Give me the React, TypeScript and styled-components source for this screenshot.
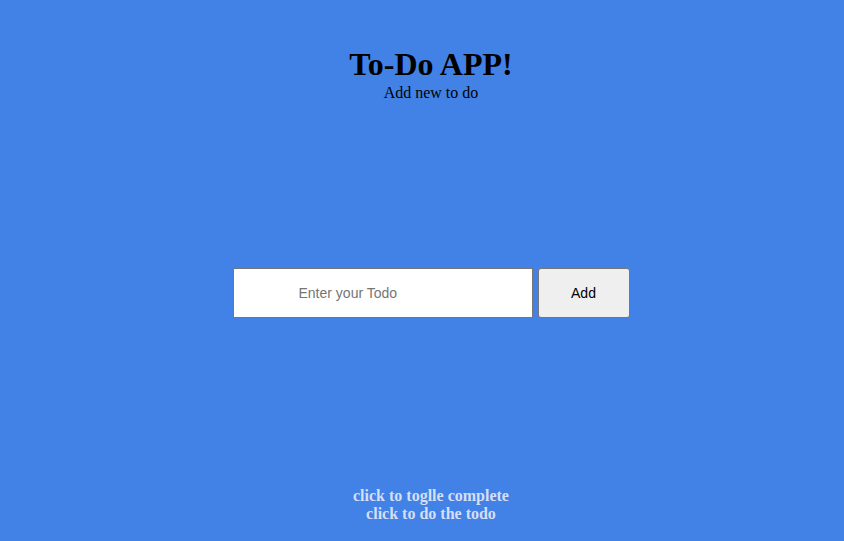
import React from "react";
import styled, { createGlobalStyle } from "styled-components";

const Global = createGlobalStyle`
  html, body { margin: 0; padding: 0; background: #4282e6; }
  body { font-family: "Liberation Serif", "Times New Roman", serif; }
`;

const Page = styled.div`
  box-sizing: border-box;
  height: 541px;
  padding-left: 18px;
  display: flex;
  flex-direction: column;
  align-items: center;
  background: #4282e6;
`;

const Header = styled.header`
  padding-top: 46px;
  display: flex;
  flex-direction: column;
  align-items: center;
`;

const Title = styled.h1`
  margin: 0;
  font-size: 32px;
  line-height: 37px;
  font-weight: bold;
  color: #000;
`;

const Subtitle = styled.div`
  margin-top: 1px;
  font-size: 16px;
  line-height: 18px;
  color: #000;
`;

const Main = styled.main`
  flex: 1;
  padding-bottom: 4px;
  display: flex;
  align-items: center;
  justify-content: center;
`;

const Form = styled.form`
  display: flex;
  gap: 5px;
`;

const Input = styled.input`
  box-sizing: border-box;
  width: 300px;
  height: 50px;
  padding: 0 0 0 65px;
  border: 1px solid #767676;
  border-radius: 0;
  background: #fff;
  font-family: "Liberation Sans", Arial, sans-serif;
  font-size: 14px;
  color: #000;
  outline: none;
  &::placeholder { color: #757575; }
`;

const Button = styled.button`
  box-sizing: border-box;
  width: 92px;
  height: 50px;
  border: 1px solid #767676;
  border-radius: 3px;
  background: #efefef;
  font-family: "Liberation Sans", Arial, sans-serif;
  font-size: 14px;
  color: #000;
`;

const Footer = styled.footer`
  padding-bottom: 18px;
  display: flex;
  flex-direction: column;
  align-items: center;
  font-size: 16px;
  line-height: 18px;
  font-weight: bold;
  color: #d6def5;
`;

export default function App() {
  return (
    <>
      <Global />
      <Page>
        <Header>
          <Title>To-Do APP!</Title>
          <Subtitle>Add new to do</Subtitle>
        </Header>
        <Main>
          <Form onSubmit={(e) => e.preventDefault()}>
            <Input placeholder="Enter your Todo" />
            <Button type="submit">Add</Button>
          </Form>
        </Main>
        <Footer>
          <div>click to toglle complete</div>
          <div>click to do the todo</div>
        </Footer>
      </Page>
    </>
  );
}
